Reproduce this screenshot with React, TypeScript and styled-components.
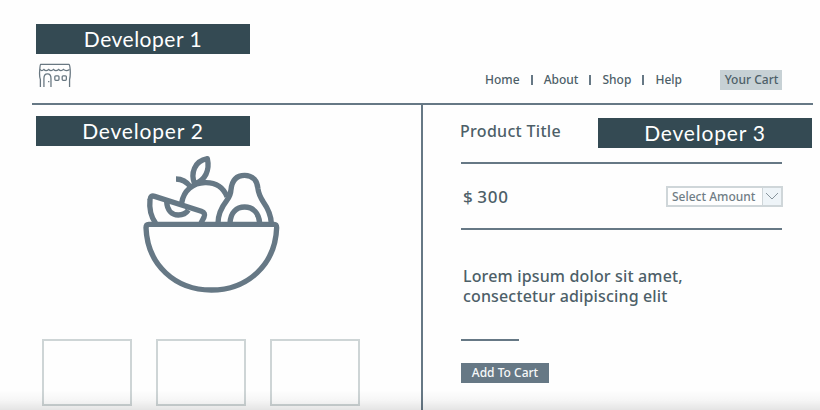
import React from "react";
import styled, { createGlobalStyle } from "styled-components";

const slate = "#667885";
const ink = "#4d5f68";
const deep = "#344a53";

const GlobalStyle = createGlobalStyle`
  *, *::before, *::after { box-sizing: border-box; }
  body { margin: 0; background: #fefefe; }
`;

const Page = styled.div`
  position: relative;
  width: 820px;
  height: 410px;
  overflow: hidden;
  display: flex;
  flex-direction: column;
  background: #fefefe;
  color: ${ink};
  font-family: "Noto Sans", sans-serif;
  font-weight: 500;
  white-space: nowrap;
`;

const Label = styled.div<{ $spacing?: number }>`
  flex: none;
  width: 214px;
  height: 30px;
  display: flex;
  align-items: center;
  justify-content: center;
  background: ${deep};
  color: #fff;
  font: 400 21px/30px Lato, sans-serif;
  letter-spacing: ${(p) => p.$spacing ?? 0.8}px;
`;

const Header = styled.header`
  flex: none;
  height: 105px;
  margin: 0 7px 0 32px;
  padding: 24px 31px 0 4px;
  border-bottom: 2px solid ${slate};
`;

const HeaderRow = styled.div`
  display: flex;
  height: 36px;
  margin-top: 9px;
  padding-left: 2px;
  justify-content: space-between;
`;

const HeaderActions = styled.div`
  display: flex;
  height: 20px;
  margin-top: 7px;
  align-items: center;
`;

const Nav = styled.nav`
  display: flex;
  width: 197px;
  margin-right: 38px;
  align-items: center;
  justify-content: space-between;
  font-size: 12px;
  line-height: 20px;
`;

const NavLink = styled.span`
  letter-spacing: 0;
`;

const Divider = styled.i`
  width: 2px;
  height: 10px;
  background: ${slate};
`;

const CartLink = styled.span`
  width: 62px;
  height: 20px;
  padding-left: 1px;
  background: #c7d1d5;
  text-align: center;
  font-size: 12px;
  line-height: 20px;
`;

const Body = styled.main`
  flex: 1;
  display: flex;
`;

const Gallery = styled.section`
  width: 423px;
  padding: 11px 0 0 36px;
  border-right: 2px solid ${slate};
`;

const Hero = styled.div`
  height: 155px;
  margin: -1px 0 0 94px;
`;

const Thumbs = styled.div`
  display: flex;
  gap: 24px;
  margin: 39px 0 0 6px;
`;

const Thumb = styled.div`
  width: 90px;
  height: 67px;
  border: 2px solid #ced5d6;
`;

const Product = styled.section`
  flex: 1;
  padding: 13px 8px 0 38px;
`;

const TitleRow = styled.div`
  display: flex;
  justify-content: space-between;
  height: 44px;
`;

const Title = styled.h1`
  margin: 0 0 0 -1px;
  font-size: 16px;
  font-weight: 500;
  line-height: 26px;
  letter-spacing: 0.3px;
`;

const PriceRow = styled.div`
  display: flex;
  align-items: center;
  justify-content: space-between;
  width: 321px;
  height: 68px;
  padding-left: 2px;
  border: solid ${slate};
  border-width: 2px 0;
`;

const Price = styled.span`
  font-size: 17px;
  letter-spacing: 0.8px;
  word-spacing: -1.5px;
`;

const Select = styled.div`
  display: flex;
  width: 117px;
  height: 21px;
  margin-right: -1px;
  border: 2px solid #cfd6d9;
  color: #707d85;
  font-size: 12px;
  line-height: 17px;
`;

const SelectText = styled.span`
  width: 94px;
  padding-left: 4px;
`;

const SelectArrow = styled.span`
  display: flex;
  flex: 1;
  align-items: center;
  justify-content: center;
  border-left: 1px solid #cfd6d9;
  background: #eef4f8;
`;

const Description = styled.p`
  margin: 36px 0 0 2px;
  font-size: 16px;
  line-height: 20px;
  letter-spacing: 0.15px;
`;

const Rule = styled.div`
  width: 58px;
  height: 2px;
  margin-top: 33px;
  background: ${slate};
`;

const AddButton = styled.button`
  display: block;
  width: 88px;
  height: 20px;
  margin-top: 22px;
  padding: 0;
  border: 0;
  background: ${slate};
  color: #f6f8f9;
  font: 500 12px/20px "Noto Sans", sans-serif;
`;

const BottomShade = styled.div`
  position: absolute;
  inset: auto 0 0;
  height: 20px;
  background: linear-gradient(rgba(0, 0, 0, 0), rgba(0, 0, 0, 0.03) 50%, rgba(0, 0, 0, 0.1));
  pointer-events: none;
`;

const StoreIcon = () => (
  <svg width="33" height="25" viewBox="0 0 102 78" fill="none" stroke="#687781" strokeWidth="4">
    <path d="M7 75V52Q3 40 5 22Q6 5 8 4H96Q99 5 100 22Q101 40 98 52V75" />
    <path d="M6 20Q11 27 18 20Q24 28 33 20Q40 28 48 20Q55 28 64 20Q71 28 79 20Q87 28 98 20" />
    <path d="M18 75V48Q18 34 29 34Q40 34 40 48V75M33 56V60" />
    <rect x="52" y="40" width="13" height="14" rx="3" />
    <rect x="75" y="40" width="13" height="14" rx="3" />
  </svg>
);

const FruitBowl = () => (
  <svg
    width="165"
    height="155"
    viewBox="0 0 495 465"
    fill="none"
    stroke={slate}
    strokeWidth="16"
    strokeLinejoin="round"
  >
    <path d="M56 238H432Q440 238 440 248C436 360 352 435 244 435C136 435 52 360 48 248Q48 238 56 238Z" />
    <path d="M77 235C62 214 57 191 60 164Q61 150 74 154L214 199Q228 204 222 217L213 234" />
    <path d="M110 170C111 195 125 210 145 210Q165 210 175 195" />
    <path d="M155 174C161 137 188 114 225 113C257 112 280 128 291 155" />
    <path d="M138 102Q164 102 182 126" />
    <path d="M194 117C181 85 193 48 232 41C240 76 226 105 194 117Z" />
    <path d="M264 235C264 209 272 190 290 167Q302 152 303 134C306 105 320 91 344 91C369 91 382 108 384 132Q386 149 400 171C417 195 423 211 424 235" />
    <path d="M300 234C302 203 319 186 344 186C369 186 387 204 389 234" />
  </svg>
);

export default function App() {
  return (
    <>
      <GlobalStyle />
      <Page>
        <Header>
          <Label $spacing={0.5}>Developer 1</Label>
          <HeaderRow>
            <StoreIcon />
            <HeaderActions>
              <Nav>
                <NavLink>Home</NavLink>
                <Divider />
                <NavLink>About</NavLink>
                <Divider />
                <NavLink>Shop</NavLink>
                <Divider />
                <NavLink>Help</NavLink>
              </Nav>
              <CartLink>Your Cart</CartLink>
            </HeaderActions>
          </HeaderRow>
        </Header>
        <Body>
          <Gallery>
            <Label>Developer 2</Label>
            <Hero>
              <FruitBowl />
            </Hero>
            <Thumbs>
              <Thumb />
              <Thumb />
              <Thumb />
            </Thumbs>
          </Gallery>
          <Product>
            <TitleRow>
              <Title>Product Title</Title>
              <Label>Developer 3</Label>
            </TitleRow>
            <PriceRow>
              <Price>$ 300</Price>
              <Select>
                <SelectText>Select Amount</SelectText>
                <SelectArrow>
                  <svg width="14" height="10" viewBox="0 0 14 10" fill="none" stroke="#87949c">
                    <path d="M1 2L7 8L13 2" />
                  </svg>
                </SelectArrow>
              </Select>
            </PriceRow>
            <Description>
              Lorem ipsum dolor sit amet,
              <br />
              consectetur adipiscing elit
            </Description>
            <Rule />
            <AddButton>Add To Cart</AddButton>
          </Product>
        </Body>
        <BottomShade />
      </Page>
    </>
  );
}
